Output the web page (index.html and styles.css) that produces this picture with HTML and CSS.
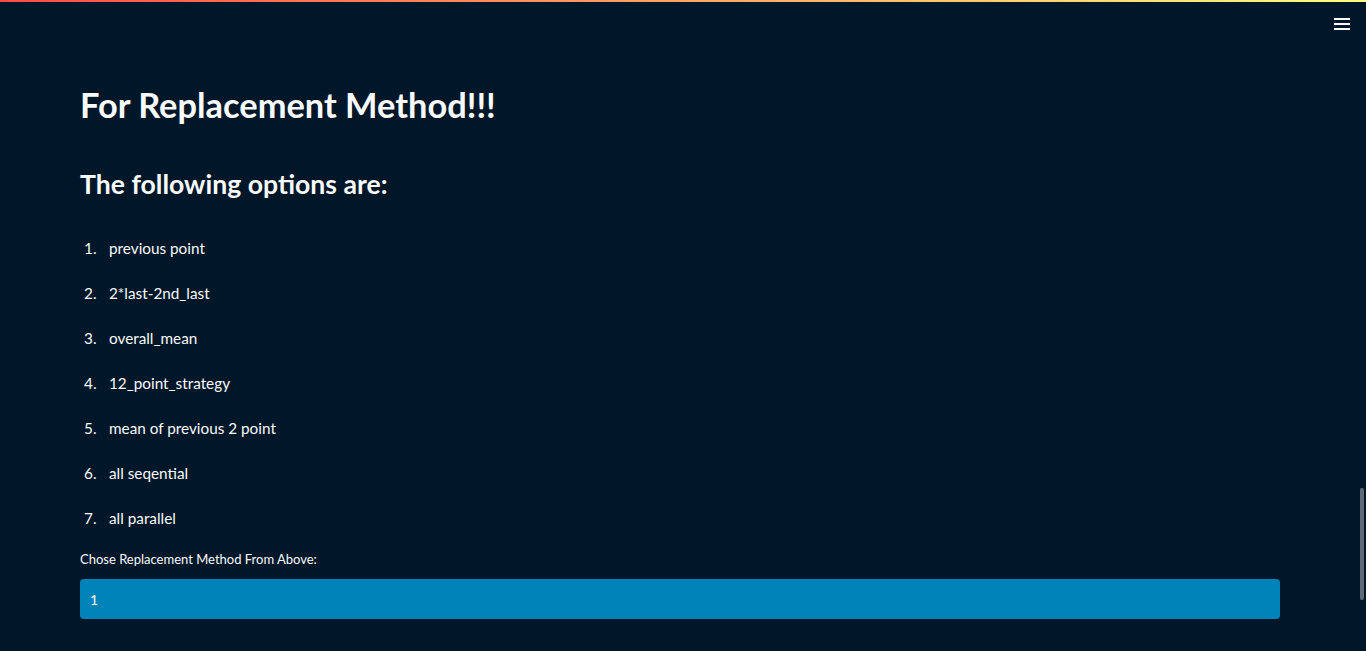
FILE: index.html
```html
<!DOCTYPE html>
<html>
<head>
<meta charset="utf-8">
<link rel="stylesheet" href="styles.css">
</head>
<body>
<div class="decoration"></div>
<header class="topbar">
  <button class="menu" aria-label="menu">
    <svg width="16" height="12" viewBox="0 0 16 12"><rect x="0" y="0" width="16" height="2" fill="#fafafa"/><rect x="0" y="5" width="16" height="2" fill="#fafafa"/><rect x="0" y="10" width="16" height="2" fill="#fafafa"/></svg>
  </button>
</header>
<main class="main">
  <h1 class="title">For Replacement Method!!!</h1>
  <h2 class="subtitle">The following options are:</h2>
  <ol class="options">
    <li>previous point</li>
    <li>2*last-2nd_last</li>
    <li>overall_mean</li>
    <li>12_point_strategy</li>
    <li>mean of previous 2 point</li>
    <li>all seqential</li>
    <li>all parallel</li>
  </ol>
  <label class="label">Chose Replacement Method From Above:</label>
  <div class="input">1</div>
</main>
<div class="scrollbar"></div>
</body>
</html>
```
FILE: styles.css
```css
html, body {
  margin: 0;
  padding: 0;
  height: 100%;
  overflow: hidden;
}
body {
  background: #001629;
  color: #fafafa;
  font-family: "Lato", "Liberation Sans", sans-serif;
}
.decoration {
  height: 2px;
  background: linear-gradient(90deg, #ff4b4b, #fffd80);
}
.topbar {
  display: flex;
  justify-content: flex-end;
  align-items: flex-start;
  padding: 16px 16px 0 0;
  height: 30px;
}
.menu {
  background: none;
  border: none;
  padding: 0;
  display: flex;
}
.main {
  padding: 0 86px 0 80px;
}
.title {
  font-size: 34.4px;
  font-weight: 700;
  margin: 29px 0 0 0;
  line-height: 56px;
}
.subtitle {
  font-size: 26.6px;
  font-weight: 700;
  margin: 33px 0 0 0;
  line-height: 36px;
}
.options {
  list-style: none;
  counter-reset: opt;
  margin: 36px 0 0 0;
  padding: 0 0 0 4px;
  font-size: 15.3px;
}
.options li {
  counter-increment: opt;
  display: flex;
  line-height: 20px;
  margin-bottom: 25px;
}
.options li::before {
  content: counter(opt) ".";
  width: 25px;
  flex: none;
}
.label {
  display: block;
  font-size: 13px;
  margin-top: -3px;
  line-height: 18px;
}
.input {
  margin-top: 11px;
  height: 40px;
  background: #0083b8;
  border-radius: 4px;
  padding: 0 10px;
  display: flex;
  align-items: center;
  font-size: 14px;
}
.scrollbar {
  position: absolute;
  right: 2px;
  top: 488px;
  width: 4px;
  height: 112px;
  border-radius: 2px;
  background: #5f6b77;
}
```
